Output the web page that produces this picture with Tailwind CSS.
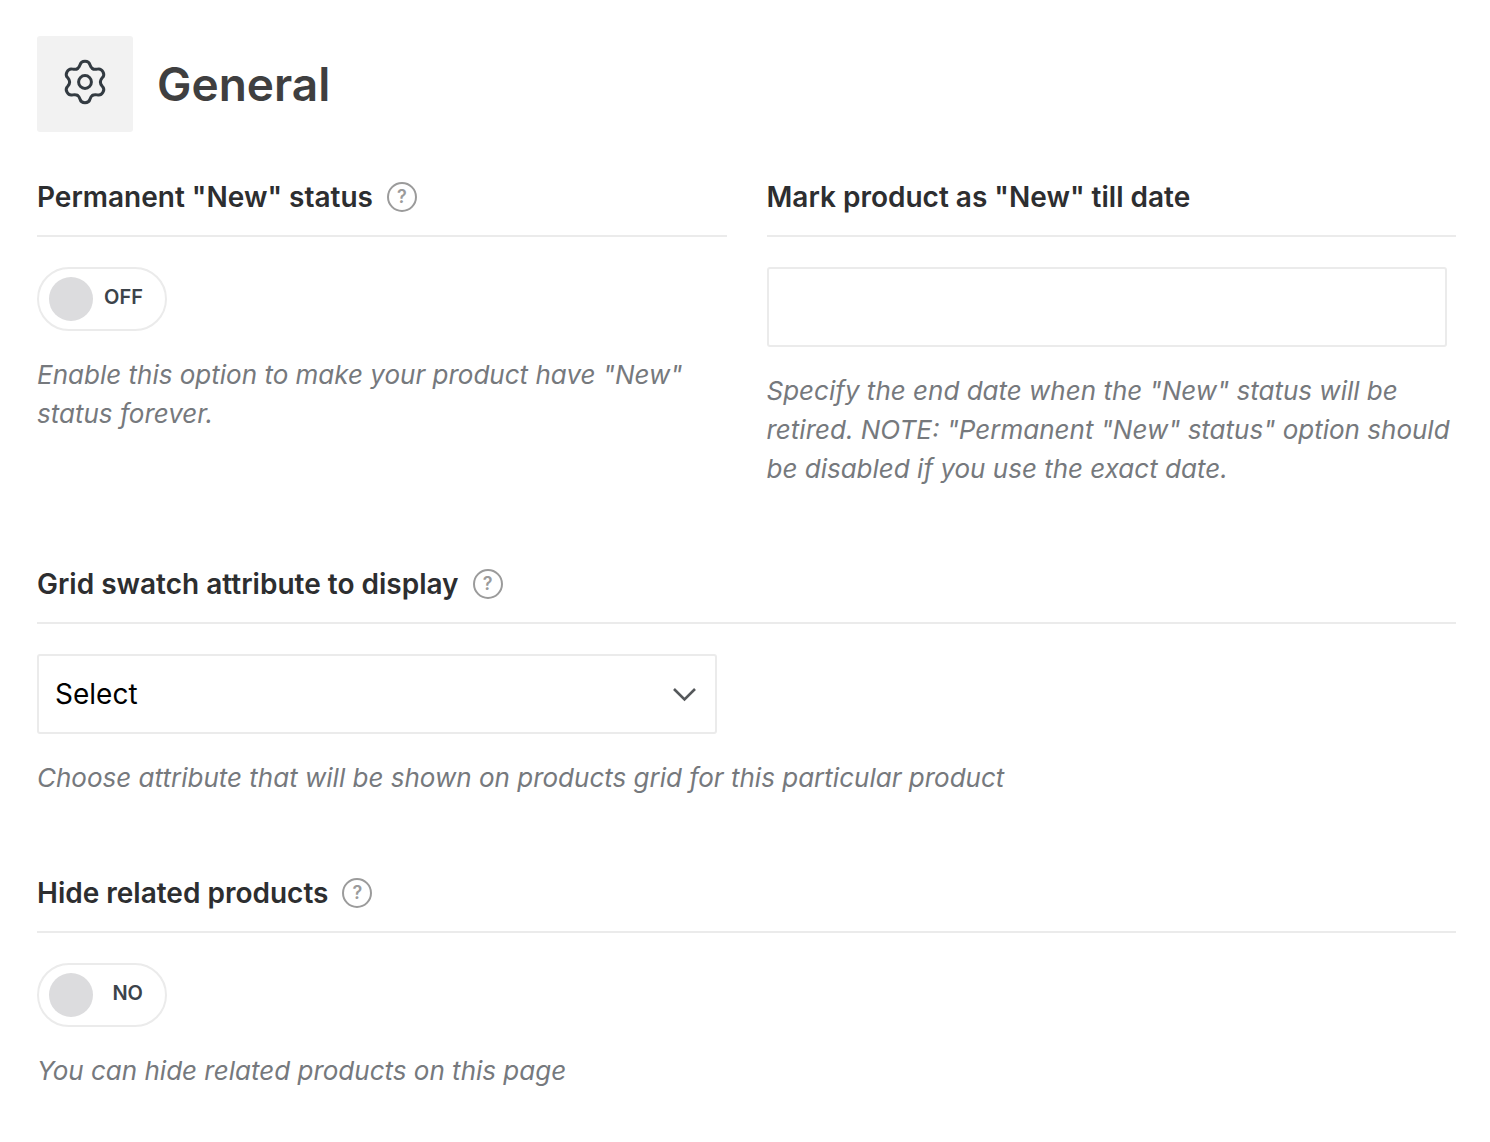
<!DOCTYPE html>
<html lang="en">
<head>
<meta charset="utf-8">
<meta name="viewport" content="width=device-width, initial-scale=1">
<title>General</title>
<script src="https://cdn.jsdelivr.net/npm/@tailwindcss/browser@4"></script>
</head>
<body class="bg-white font-['Inter',sans-serif] text-[#2d2e30]">
<main class="pt-9 pb-8 pl-[37px] pr-[34px]">
  <header class="flex items-center gap-6">
    <div class="flex size-24 items-center justify-center rounded-[3px] bg-[#f2f2f2] pb-1">
      <svg class="size-12" viewBox="-24 -24 48 48" fill="none" stroke="#333b42" stroke-width="3" stroke-linecap="round" aria-hidden="true">
        <defs>
          <path id="tooth" d="M-7.7 -13.3C-5.9 -14.3 -5.5 -15.6 -5 -17.1C-4.4 -19.4 -2.8 -20.7 0 -20.7C2.8 -20.7 4.4 -19.4 5 -17.1C5.500 -15.6 5.900 -14.3 7.7 -13.3"/>
        </defs>
        <use href="#tooth"/>
        <use href="#tooth" transform="rotate(60)"/>
        <use href="#tooth" transform="rotate(120)"/>
        <use href="#tooth" transform="rotate(180)"/>
        <use href="#tooth" transform="rotate(240)"/>
        <use href="#tooth" transform="rotate(300)"/>
        <circle r="6.4"/>
      </svg>
    </div>
    <h1 class="text-[46px] leading-[56px] font-semibold text-[#3f3f40]">General</h1>
  </header>

  <form class="mt-11 flex flex-col gap-[75px]">
    <div class="grid grid-cols-2 gap-10">
      <section>
        <div class="flex items-center gap-3.5 border-b-2 border-[#ebebeb] pb-[17px]">
          <h2 id="new-title" class="text-[28px] leading-[42px] font-semibold">Permanent "New" status</h2>
          <button type="button" aria-label="Help" class="flex size-[30px] items-center justify-center rounded-full border-2 border-[#9b9b9b] text-[18px] leading-none font-semibold text-[#9b9b9b]">?</button>
        </div>
        <button type="button" role="switch" aria-checked="false" aria-labelledby="new-title" class="mt-[30px] flex h-16 w-[130px] items-center justify-between rounded-full border-2 border-[#ebebeb] pr-[22px] pl-2.5">
          <span class="size-11 rounded-full bg-[#dcdcde]"></span>
          <span class="pb-1 text-[20px] leading-6 font-semibold text-[#3c434a]">OFF</span>
        </button>
        <p class="mt-6 text-[26px] leading-[39px] text-[#76797d] italic">Enable this option to make your product have "New" status forever.</p>
      </section>
      <section>
        <div class="border-b-2 border-[#ebebeb] pb-[17px]">
          <h2 class="text-[28px] leading-[42px] font-semibold"><label for="till-date">Mark product as "New" till date</label></h2>
        </div>
        <input id="till-date" type="text" class="mt-[30px] block h-20 w-full max-w-[680px] rounded-[3px] border-2 border-[#ebebeb] px-4 text-[28px] text-black">
        <p class="mt-6 text-[26px] leading-[39px] text-[#76797d] italic">Specify the end date when the "New" status will be retired. NOTE: "Permanent "New" status" option should be disabled if you use the exact date.</p>
      </section>
    </div>

    <section>
      <div class="flex items-center gap-3.5 border-b-2 border-[#ebebeb] pb-[17px]">
        <h2 class="text-[28px] leading-[42px] font-semibold"><label for="swatch">Grid swatch attribute to display</label></h2>
        <button type="button" aria-label="Help" class="flex size-[30px] items-center justify-center rounded-full border-2 border-[#9b9b9b] text-[18px] leading-none font-semibold text-[#9b9b9b]">?</button>
      </div>
      <div class="relative mt-[30px] max-w-[680px]">
        <select id="swatch" class="block h-20 w-full appearance-none rounded-[3px] border-2 border-[#ebebeb] bg-white px-4 text-[28px] leading-[42px] text-black">
          <option>Select</option>
        </select>
        <svg class="pointer-events-none absolute top-7 right-5 size-6" viewBox="0 0 24 24" fill="none" stroke="#55585b" stroke-width="2.6" aria-hidden="true"><path d="M1 7L11.500 17.500L22 7"/></svg>
      </div>
      <p class="mt-6 text-[26px] leading-[39px] text-[#76797d] italic">Choose attribute that will be shown on products grid for this particular product</p>
    </section>

    <section>
      <div class="flex items-center gap-3.5 border-b-2 border-[#ebebeb] pb-[17px]">
        <h2 id="related-title" class="text-[28px] leading-[42px] font-semibold">Hide related products</h2>
        <button type="button" aria-label="Help" class="flex size-[30px] items-center justify-center rounded-full border-2 border-[#9b9b9b] text-[18px] leading-none font-semibold text-[#9b9b9b]">?</button>
      </div>
      <button type="button" role="switch" aria-checked="false" aria-labelledby="related-title" class="mt-[30px] flex h-16 w-[130px] items-center justify-between rounded-full border-2 border-[#ebebeb] pr-[22px] pl-2.5">
        <span class="size-11 rounded-full bg-[#dcdcde]"></span>
        <span class="pb-1 text-[20px] leading-6 font-semibold text-[#3c434a]">NO</span>
      </button>
      <p class="mt-6 text-[26px] leading-[39px] text-[#76797d] italic">You can hide related products on this page</p>
    </section>
  </form>
</main>
</body>
</html>
